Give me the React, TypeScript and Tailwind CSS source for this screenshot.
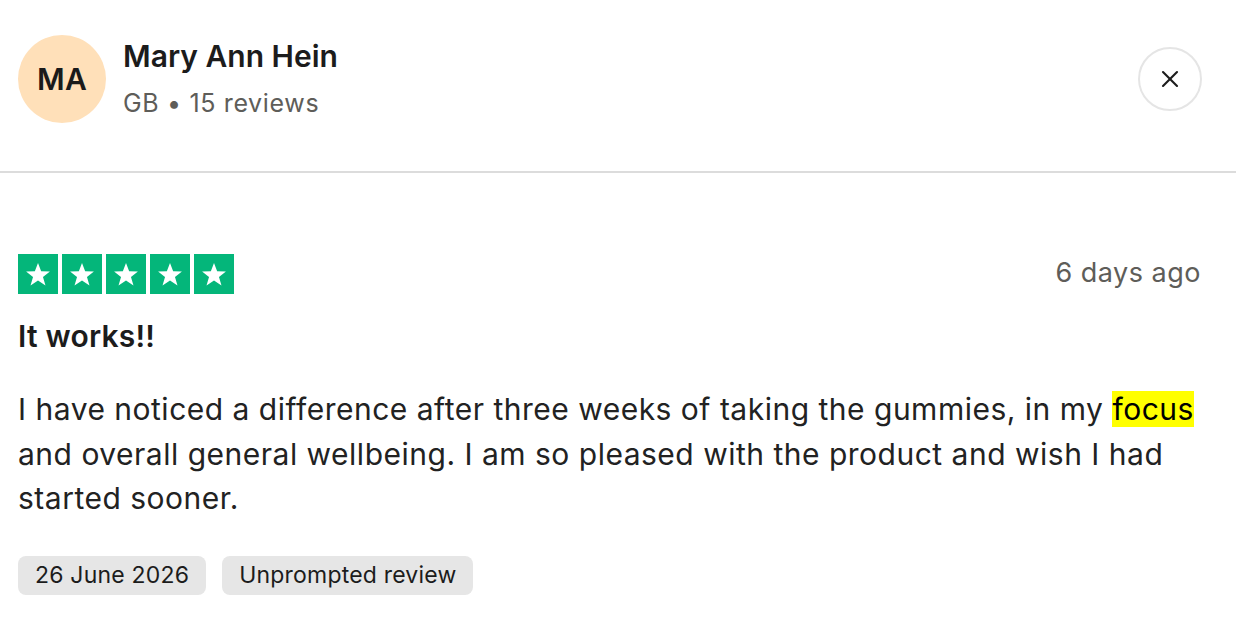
import { X } from 'lucide-react';

function Star() {
  return (
    <div className="flex h-10 w-10 items-center justify-center bg-[#04b67a]">
      <svg viewBox="0 0 24 24" className="h-[26px] w-[26px]" fill="#fff">
        <path d="M12 1.8l2.9 7.6 8.1.3-6.4 5 2.3 7.8L12 18l-6.9 4.5 2.3-7.8-6.4-5 8.1-.3z" />
      </svg>
    </div>
  );
}

export default function App() {
  return (
    <div className="h-[640px] w-[1236px] bg-white text-[#1c1c1c]" style={{ fontFamily: 'Inter, "Noto Sans", sans-serif' }}>
      <div className="flex items-center justify-between border-b-2 border-[#dcdcdc] pl-[18px] pr-[34px] pt-[35px] pb-[48px]">
        <div className="flex items-center gap-[17px]">
          <div className="flex h-[88px] w-[88px] items-center justify-center rounded-full bg-[#ffe0b9] text-[30px] font-semibold tracking-[0.3px] text-[#1a1a1a]">
            MA
          </div>
          <div className="flex flex-col gap-[7px]">
            <div className="text-[30px] font-semibold leading-[40px]">Mary Ann Hein</div>
            <div className="text-[25px] leading-[40px] tracking-[0.65px] text-[#5e5d59]">GB • 15 reviews</div>
          </div>
        </div>
        <button className="flex h-16 w-16 items-center justify-center rounded-full border-2 border-[#e5e5e5]">
          <X size={28} strokeWidth={1.8} className="text-[#1c1c1c]" />
        </button>
      </div>
      <div className="pl-[18px] pr-[35px] pt-[81px]">
        <div className="flex items-center justify-between">
          <div className="flex gap-[4px]">
            <Star />
            <Star />
            <Star />
            <Star />
            <Star />
          </div>
          <div className="-mt-[2px] text-[27px] tracking-[0.5px] text-[#5e5d59]">6 days ago</div>
        </div>
        <div className="mt-[22px] text-[30px] font-semibold leading-[40px] tracking-[0.2px]">It works!!</div>
        <p className="mt-[31px] text-[30px] leading-[44.5px] tracking-[0.5px] text-[#222]">
          I have noticed a difference after three weeks of taking the gummies, in my{' '}
          <span className="bg-[#ffff00] text-black">focus</span> and overall general wellbeing. I am so pleased with the
          product and wish I had started sooner.
        </p>
        <div className="mt-[35px] flex gap-4">
          <span className="rounded-lg bg-[#e6e6e6] px-[17px] py-[5px] text-[23px] leading-[29px] tracking-[0.2px]">26 June 2026</span>
          <span className="rounded-lg bg-[#e6e6e6] px-[17px] py-[5px] text-[23px] leading-[29px] tracking-[0.2px]">Unprompted review</span>
        </div>
      </div>
    </div>
  );
}
